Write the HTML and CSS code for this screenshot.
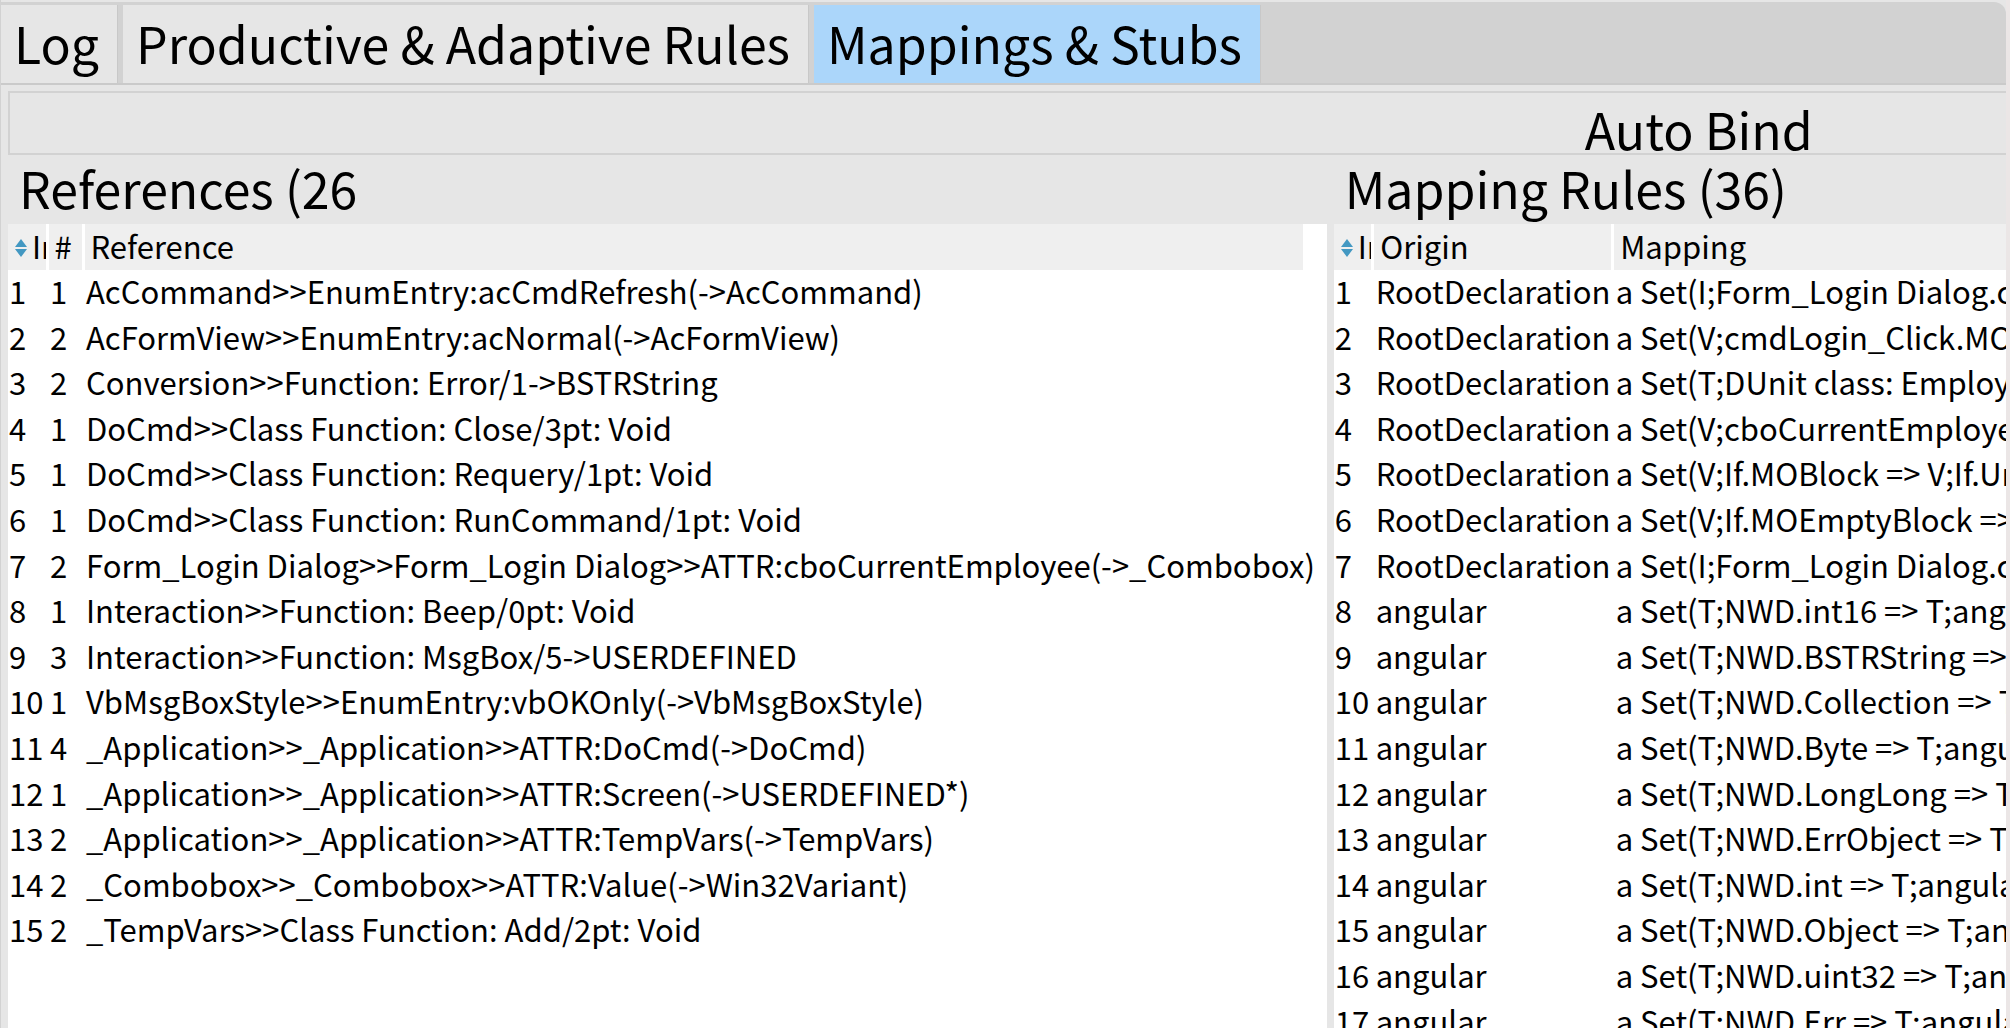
FILE: index.html
```html
<!DOCTYPE html>
<html lang="en">
<head>
<meta charset="utf-8">
<title>Mappings &amp; Stubs</title>
<link rel="stylesheet" href="styles.css">
</head>
<body>
<main class="window">
  <div class="tabs" role="tablist">
    <button class="tab" type="button" role="tab" aria-selected="false">Log</button>
    <button class="tab" type="button" role="tab" aria-selected="false">Productive &amp; Adaptive Rules</button>
    <button class="tab tab-active" type="button" role="tab" aria-selected="true">Mappings &amp; Stubs</button>
  </div>
  <div class="toolbar">
    <button class="bind" type="button">Auto Bind</button>
  </div>
  <div class="panes">
    <section class="pane pane-references">
      <h2 class="title" id="references-title">References (26</h2>
      <div class="list">
        <table class="grid grid-references" aria-labelledby="references-title">
          <colgroup><col class="col-index"><col class="col-count"><col></colgroup>
          <thead>
            <tr>
              <th><svg class="sort" viewBox="0 0 14 18" aria-hidden="true"><path d="M7 0 13 8H1ZM1 10H13L7 18Z"/></svg>In</th>
              <th>#</th>
              <th>Reference</th>
            </tr>
          </thead>
          <tbody>
            <tr><td>1</td><td>1</td><td>AcCommand&gt;&gt;EnumEntry:acCmdRefresh(-&gt;AcCommand)</td></tr>
            <tr><td>2</td><td>2</td><td>AcFormView&gt;&gt;EnumEntry:acNormal(-&gt;AcFormView)</td></tr>
            <tr><td>3</td><td>2</td><td>Conversion&gt;&gt;Function: Error/1-&gt;BSTRString</td></tr>
            <tr><td>4</td><td>1</td><td>DoCmd&gt;&gt;Class Function: Close/3pt: Void</td></tr>
            <tr><td>5</td><td>1</td><td>DoCmd&gt;&gt;Class Function: Requery/1pt: Void</td></tr>
            <tr><td>6</td><td>1</td><td>DoCmd&gt;&gt;Class Function: RunCommand/1pt: Void</td></tr>
            <tr><td>7</td><td>2</td><td>Form_Login Dialog&gt;&gt;Form_Login Dialog&gt;&gt;ATTR:cboCurrentEmployee(-&gt;_Combobox)</td></tr>
            <tr><td>8</td><td>1</td><td>Interaction&gt;&gt;Function: Beep/0pt: Void</td></tr>
            <tr><td>9</td><td>3</td><td>Interaction&gt;&gt;Function: MsgBox/5-&gt;USERDEFINED</td></tr>
            <tr><td>10</td><td>1</td><td>VbMsgBoxStyle&gt;&gt;EnumEntry:vbOKOnly(-&gt;VbMsgBoxStyle)</td></tr>
            <tr><td>11</td><td>4</td><td>_Application&gt;&gt;_Application&gt;&gt;ATTR:DoCmd(-&gt;DoCmd)</td></tr>
            <tr><td>12</td><td>1</td><td>_Application&gt;&gt;_Application&gt;&gt;ATTR:Screen(-&gt;USERDEFINED*)</td></tr>
            <tr><td>13</td><td>2</td><td>_Application&gt;&gt;_Application&gt;&gt;ATTR:TempVars(-&gt;TempVars)</td></tr>
            <tr><td>14</td><td>2</td><td>_Combobox&gt;&gt;_Combobox&gt;&gt;ATTR:Value(-&gt;Win32Variant)</td></tr>
            <tr><td>15</td><td>2</td><td>_TempVars&gt;&gt;Class Function: Add/2pt: Void</td></tr>
          </tbody>
        </table>
      </div>
    </section>
    <section class="pane pane-rules">
      <h2 class="title" id="rules-title">Mapping Rules (36)</h2>
      <div class="list">
        <table class="grid" aria-labelledby="rules-title">
          <colgroup><col class="col-index"><col class="col-origin"><col></colgroup>
          <thead>
            <tr>
              <th><svg class="sort" viewBox="0 0 14 18" aria-hidden="true"><path d="M7 0 13 8H1ZM1 10H13L7 18Z"/></svg>In</th>
              <th>Origin</th>
              <th>Mapping</th>
            </tr>
          </thead>
          <tbody>
            <tr><td>1</td><td>RootDeclaration</td><td>a Set(I;Form_Login Dialog.c</td></tr>
            <tr><td>2</td><td>RootDeclaration</td><td>a Set(V;cmdLogin_Click.MO</td></tr>
            <tr><td>3</td><td>RootDeclaration</td><td>a Set(T;DUnit class: Employ</td></tr>
            <tr><td>4</td><td>RootDeclaration</td><td>a Set(V;cboCurrentEmploye</td></tr>
            <tr><td>5</td><td>RootDeclaration</td><td>a Set(V;If.MOBlock =&gt; V;If.Un</td></tr>
            <tr><td>6</td><td>RootDeclaration</td><td>a Set(V;If.MOEmptyBlock =&gt;</td></tr>
            <tr><td>7</td><td>RootDeclaration</td><td>a Set(I;Form_Login Dialog.c</td></tr>
            <tr><td>8</td><td>angular</td><td>a Set(T;NWD.int16 =&gt; T;angu</td></tr>
            <tr><td>9</td><td>angular</td><td>a Set(T;NWD.BSTRString =&gt;</td></tr>
            <tr><td>10</td><td>angular</td><td>a Set(T;NWD.Collection =&gt; T</td></tr>
            <tr><td>11</td><td>angular</td><td>a Set(T;NWD.Byte =&gt; T;angu</td></tr>
            <tr><td>12</td><td>angular</td><td>a Set(T;NWD.LongLong =&gt; T</td></tr>
            <tr><td>13</td><td>angular</td><td>a Set(T;NWD.ErrObject =&gt; T;</td></tr>
            <tr><td>14</td><td>angular</td><td>a Set(T;NWD.int =&gt; T;angula</td></tr>
            <tr><td>15</td><td>angular</td><td>a Set(T;NWD.Object =&gt; T;an</td></tr>
            <tr><td>16</td><td>angular</td><td>a Set(T;NWD.uint32 =&gt; T;ang</td></tr>
            <tr><td>17</td><td>angular</td><td>a Set(T;NWD.Err =&gt; T;angula</td></tr>
          </tbody>
        </table>
      </div>
    </section>
  </div>
</main>
</body>
</html>
```
FILE: styles.css
```css
* {
  box-sizing: border-box;
}

body {
  margin: 0;
  background: #ebe6e6;
  color: #000;
  font-family: "Noto Sans CJK SC", "Noto Sans", sans-serif;
  font-size: 31px;
}

.window {
  display: flex;
  flex-direction: column;
  height: 100vh;
  margin-right: 4px;
  padding-top: 2px;
  overflow: hidden;
  background: #e6e6e6;
  border-left: 1px solid #d2d2d2;
}

.tabs {
  display: flex;
  flex: none;
  gap: 5px;
  padding-top: 3px;
  background: #d2d2d2;
  border-bottom: 2px solid #cacaca;
  border-radius: 0 12px 0 0;
}

.tab {
  height: 78px;
  padding: 0 18px 4px 13px;
  background: #e6e6e6;
  border: 0;
  border-right: 1px solid #c8c8c8;
  color: inherit;
  font: inherit;
  font-size: 50px;
  line-height: 74px;
  white-space: nowrap;
}

.tab-active {
  background: #abd6fa;
}

.toolbar {
  flex: none;
  padding: 6px 0 0 7px;
  overflow: hidden;
}

.bind {
  display: block;
  width: 169%;
  height: 64px;
  padding: 10px 0 0 5px;
  overflow: hidden;
  background: #e6e6e6;
  border: 2px solid #d2d2d2;
  color: inherit;
  font: inherit;
  font-size: 50px;
  line-height: 50px;
}

.panes {
  display: flex;
  flex: 1;
  gap: 7px;
  min-height: 0;
  padding-left: 7px;
}

.pane {
  display: flex;
  flex-direction: column;
  min-width: 0;
}

.pane-references {
  flex: 0 0 66%;
}

.pane-rules {
  flex: 1;
}

.title {
  flex: none;
  height: 69px;
  margin: 0;
  padding-left: 11px;
  font-size: 50px;
  font-weight: 400;
  line-height: 64px;
  white-space: nowrap;
}

.list {
  flex: 1;
  min-height: 0;
  overflow: hidden;
  background: #fff;
}

.grid {
  width: 100%;
  border-collapse: collapse;
  table-layout: fixed;
}

.grid-references {
  width: calc(100% - 24px);
}

.col-index {
  width: 39px;
}

.col-count {
  width: 36px;
}

.col-origin {
  width: 240px;
}

.grid th,
.grid td {
  text-align: left;
  vertical-align: top;
  white-space: nowrap;
}

.grid th {
  height: 46px;
  padding: 0 0 0 6px;
  overflow: hidden;
  background: #efefef;
  border-right: 3px solid #fff;
  font-weight: 400;
  line-height: 43px;
}

.grid th:last-child {
  border-right: 0;
}

.grid td {
  height: 46px;
  padding: 0 0 0 3px;
  line-height: 42px;
}

.grid td:first-child {
  padding-left: 1px;
}

/* Shorter rows keep the average row pitch between 45 and 46 pixels. */
.grid tr:nth-child(5n + 2) td,
.grid tr:nth-child(5n + 4) td {
  height: 45px;
}

.sort {
  width: 14px;
  height: 18px;
  margin-right: 4px;
  vertical-align: 2px;
  fill: #4398c2;
}
```
